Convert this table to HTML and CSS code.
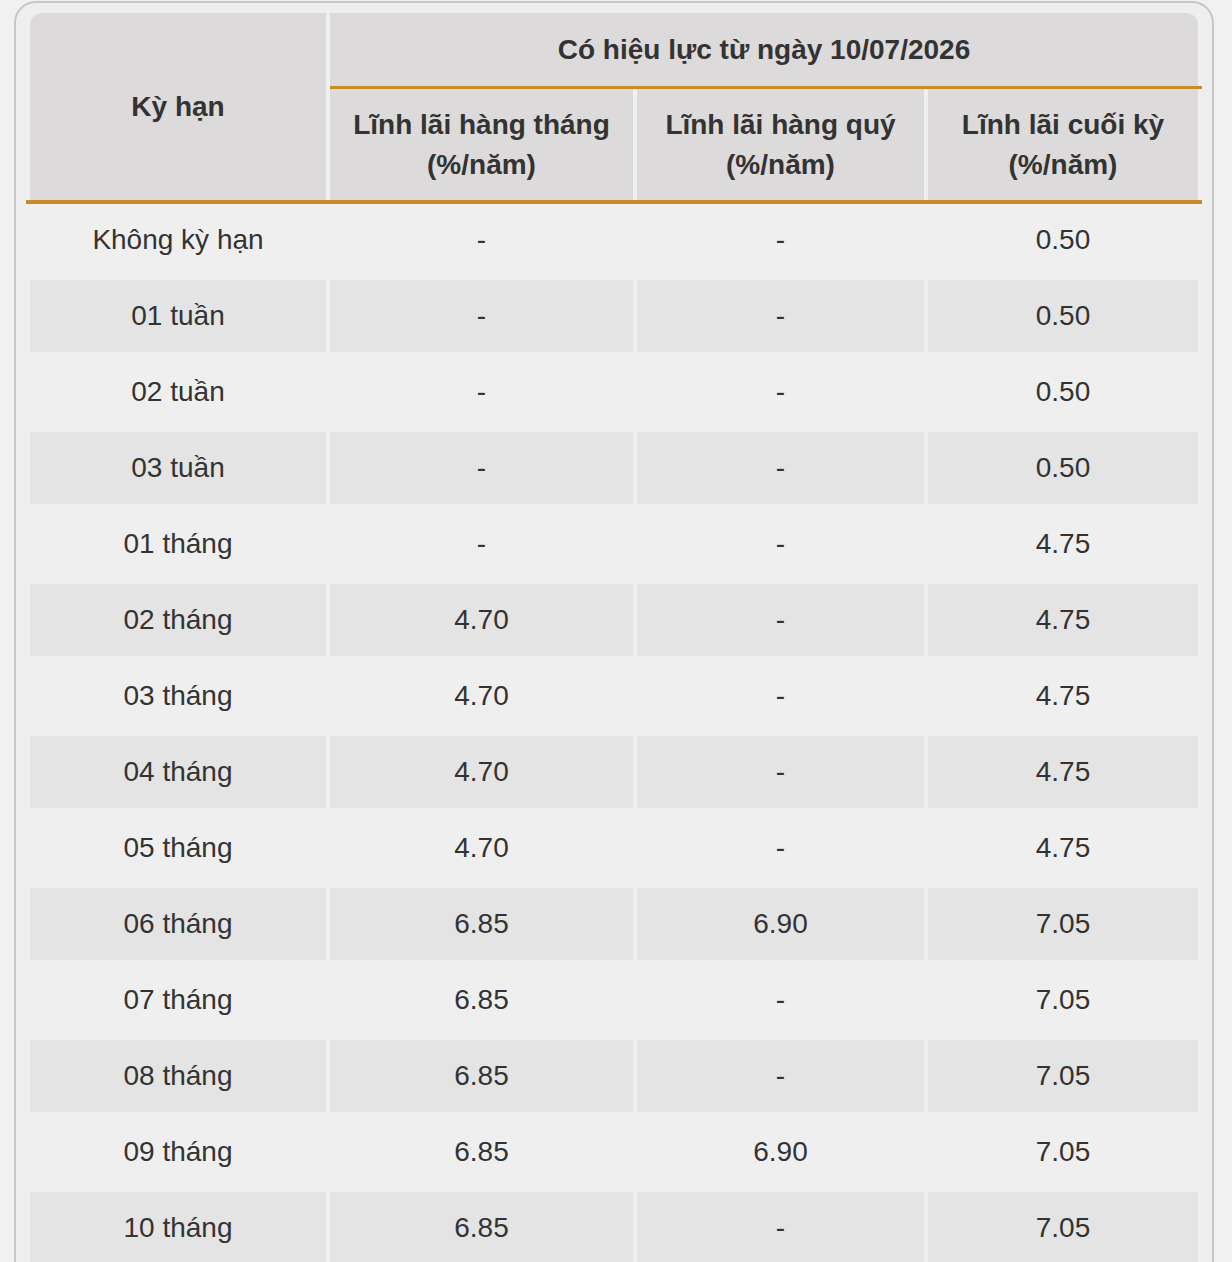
FILE: index.html
```html
<!DOCTYPE html>
<html lang="vi">
<head>
<meta charset="utf-8">
<title>Lãi suất tiết kiệm</title>
<link rel="stylesheet" href="styles.css">
</head>
<body>
<div class="card">
  <div class="rate-table" role="table">
    <div class="th th-term" role="columnheader">Kỳ hạn</div>
    <div class="th th-group" role="columnheader">Có hiệu lực từ ngày 10/07/2026</div>
    <div class="line line-top"></div>
    <div class="th th-sub c2" role="columnheader">Lĩnh lãi hàng tháng<br>(%/năm)</div>
    <div class="th th-sub c3" role="columnheader">Lĩnh lãi hàng quý<br>(%/năm)</div>
    <div class="th th-sub c4" role="columnheader">Lĩnh lãi cuối kỳ<br>(%/năm)</div>
    <div class="line line-bottom"></div>

    <div class="row"><div class="td">Không kỳ hạn</div><div class="td">-</div><div class="td">-</div><div class="td">0.50</div></div>
    <div class="row alt"><div class="td">01 tuần</div><div class="td">-</div><div class="td">-</div><div class="td">0.50</div></div>
    <div class="row"><div class="td">02 tuần</div><div class="td">-</div><div class="td">-</div><div class="td">0.50</div></div>
    <div class="row alt"><div class="td">03 tuần</div><div class="td">-</div><div class="td">-</div><div class="td">0.50</div></div>
    <div class="row"><div class="td">01 tháng</div><div class="td">-</div><div class="td">-</div><div class="td">4.75</div></div>
    <div class="row alt"><div class="td">02 tháng</div><div class="td">4.70</div><div class="td">-</div><div class="td">4.75</div></div>
    <div class="row"><div class="td">03 tháng</div><div class="td">4.70</div><div class="td">-</div><div class="td">4.75</div></div>
    <div class="row alt"><div class="td">04 tháng</div><div class="td">4.70</div><div class="td">-</div><div class="td">4.75</div></div>
    <div class="row"><div class="td">05 tháng</div><div class="td">4.70</div><div class="td">-</div><div class="td">4.75</div></div>
    <div class="row alt"><div class="td">06 tháng</div><div class="td">6.85</div><div class="td">6.90</div><div class="td">7.05</div></div>
    <div class="row"><div class="td">07 tháng</div><div class="td">6.85</div><div class="td">-</div><div class="td">7.05</div></div>
    <div class="row alt"><div class="td">08 tháng</div><div class="td">6.85</div><div class="td">-</div><div class="td">7.05</div></div>
    <div class="row"><div class="td">09 tháng</div><div class="td">6.85</div><div class="td">6.90</div><div class="td">7.05</div></div>
    <div class="row alt"><div class="td">10 tháng</div><div class="td">6.85</div><div class="td">-</div><div class="td">7.05</div></div>
    <div class="row"><div class="td">11 tháng</div><div class="td">6.85</div><div class="td">-</div><div class="td">7.05</div></div>
  </div>
</div>
</body>
</html>
```

FILE: styles.css
```css
html, body {
  margin: 0;
  padding: 0;
  background: #f1f1f1;
  font-family: "Liberation Sans", Arial, Helvetica, sans-serif;
  color: #333333;
  overflow: hidden;
}

.card {
  box-sizing: border-box;
  width: 1200px;
  margin: 1px 0 0 14px;
  padding: 10px 10px 40px;
  border: 2px solid #c6c6c6;
  border-radius: 22px;
  background: #eeeeee;
}

.rate-table {
  display: grid;
  grid-template-columns: 296px 303px 287px 270px;
  grid-template-rows: 73px 3px 111px 4px;
  grid-auto-rows: 76px;
  column-gap: 4px;
  padding: 0 4px;
  background: #efefef;
  font-size: 28px;
}

.th {
  background: #dcdada;
  font-weight: bold;
  line-height: 40px;
  text-align: center;
  display: flex;
  align-items: center;
  justify-content: center;
}

.th-term {
  grid-column: 1;
  grid-row: 1 / 4;
  border-top-left-radius: 12px;
}

.th-group {
  grid-column: 2 / 5;
  grid-row: 1;
  border-top-right-radius: 12px;
}

.th-sub { grid-row: 3; }
.c2 { grid-column: 2; }
.c3 { grid-column: 3; }
.c4 { grid-column: 4; }

.line { background: #c98b27; }

.line-top {
  grid-column: 2 / 5;
  grid-row: 2;
  margin-right: -4px;
}

.line-bottom {
  grid-column: 1 / 5;
  grid-row: 4;
  margin: 0 -4px;
}

.row {
  display: contents;
}

.td {
  display: flex;
  align-items: center;
  justify-content: center;
  line-height: 32px;
  padding-bottom: 4px;
  background-clip: content-box;
}

.row.alt .td {
  background-color: #e4e4e4;
}
```
